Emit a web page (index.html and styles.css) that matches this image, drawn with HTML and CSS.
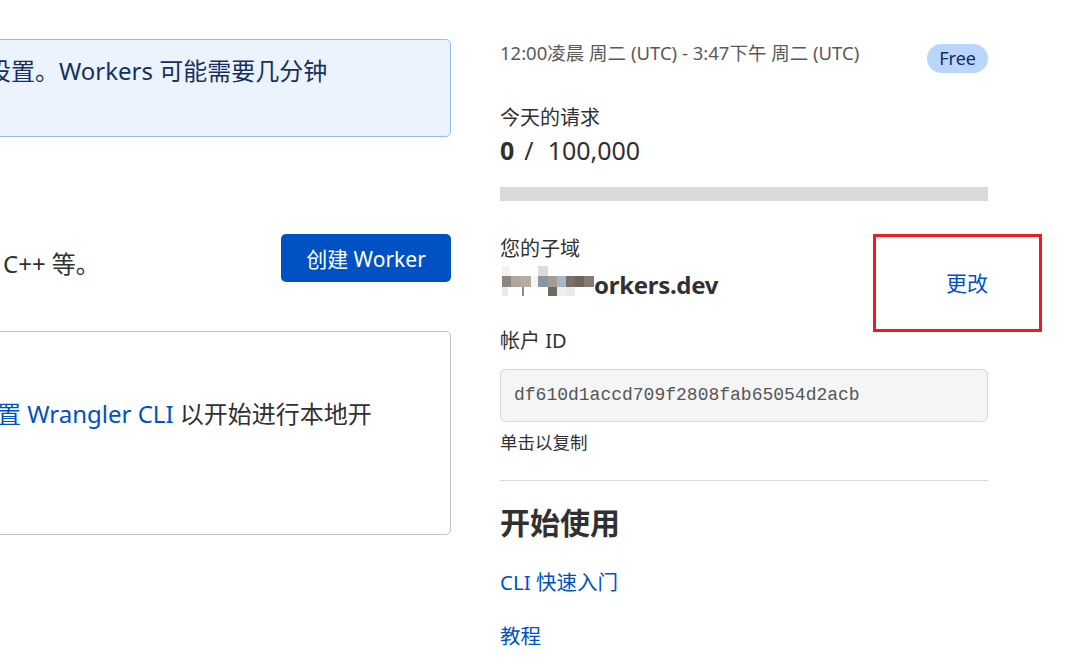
FILE: index.html
```html
<!DOCTYPE html>
<html lang="zh-CN">
<head>
<meta charset="utf-8">
<title>Workers 概述</title>
<link rel="stylesheet" href="styles.css">
</head>
<body>
<div class="page">
  <main class="left">
    <div class="notice">更新您的设置。Workers 可能需要几分钟<br>才能生效。</div>
    <div class="create-row">
      <p class="lang-text">各类语言、C++ 等。</p>
      <button class="btn-primary" type="button">创建 Worker</button>
    </div>
    <div class="cli-card">
      <p class="cli-text"><a class="link" href="#">安装并设置 Wrangler CLI</a> 以开始进行本地开<br>发。</p>
    </div>
  </main>
  <aside class="right">
    <div class="usage-head">
      <span class="period">12:00凌晨 周二 (UTC) - 3:47下午 周二 (UTC)</span>
      <span class="badge">Free</span>
    </div>
    <div class="label label-requests">今天的请求</div>
    <div class="count"><b>0</b><span class="sep">/</span>100,000</div>
    <div class="bar"></div>
    <div class="label label-sub">您的子域</div>
    <div class="domain-row">
      <span class="domain"><span class="pix" aria-hidden="true"></span>orkers.dev</span>
      <a class="link change" href="#">更改</a>
    </div>
    <div class="label label-acct">帐户 ID</div>
    <div class="id-box">df610d1accd709f2808fab65054d2acb</div>
    <div class="hint">单击以复制</div>
    <hr class="divider">
    <h2 class="start-title">开始使用</h2>
    <a class="link side-link first" href="#">CLI 快速入门</a>
    <a class="link side-link second" href="#">教程</a>
  </aside>
</div>
<div class="annotation"></div>
</body>
</html>
```

FILE: styles.css
```css
html, body {
  margin: 0;
  padding: 0;
  background: #ffffff;
}
body {
  width: 1074px;
  height: 666px;
  overflow: hidden;
  position: relative;
  font-family: "Noto Sans", "Noto Sans CJK SC", sans-serif;
  color: #313131;
}
.page {
  display: flex;
  gap: 49px;
  margin-left: -120px;
  padding-top: 39px;
  align-items: flex-start;
}
.left {
  width: 571px;
  flex: none;
}
.right {
  width: 488px;
  flex: none;
  display: flex;
  flex-direction: column;
  padding-top: 1px;
}
.link {
  color: #0051c3;
  text-decoration: none;
}

/* left column */
.notice {
  background: #ebf3ff;
  border: 1px solid #93bdf2;
  border-radius: 5px;
  padding: 14px 16px 14px 10px;
  font-size: 24px;
  line-height: 34px;
  color: #172f5c;
  white-space: nowrap;
}
.create-row {
  display: flex;
  justify-content: space-between;
  align-items: center;
  margin-top: 97px;
  height: 48px;
}
.lang-text {
  margin: 0;
  padding-left: 3px;
  padding-top: 12px;
  font-size: 24px;
  line-height: 34px;
  white-space: nowrap;
}
.btn-primary {
  width: 170px;
  height: 48px;
  border: 0;
  border-radius: 5px;
  background: #0051c3;
  color: #ffffff;
  font-family: inherit;
  font-size: 21px;
  padding: 0;
}
.cli-card {
  margin-top: 49px;
  height: 202px;
  border: 1px solid #c4c4c4;
  border-radius: 5px;
  box-sizing: content-box;
}
.cli-text {
  margin: 0;
  padding: 65px 16px 0 20px;
  font-size: 24px;
  line-height: 34px;
  white-space: nowrap;
}

/* right column */
.usage-head {
  display: flex;
  justify-content: space-between;
  align-items: flex-start;
}
.period {
  font-size: 18.5px;
  line-height: 25px;
  color: #595959;
}
.badge {
  margin-top: 4px;
  height: 29px;
  line-height: 29px;
  padding: 0 12px;
  border-radius: 15px;
  background: #b9d6ff;
  color: #1a2b55;
  font-size: 18px;
}
.label {
  font-size: 20px;
  line-height: 28px;
}
.label-requests { margin-top: 31px; }
.count {
  margin-top: 1px;
  font-size: 25px;
  line-height: 34px;
}
.count b { font-weight: 700; }
.sep {
  margin: 0 14px 0 10px;
}
.bar {
  margin-top: 20px;
  height: 14px;
  background: #d9d9d9;
}
.label-sub { margin-top: 34px; }
.domain-row {
  margin-top: 4px;
  display: flex;
  justify-content: space-between;
  align-items: center;
  height: 32px;
}
.domain {
  font-size: 24px;
  line-height: 32px;
  font-weight: 700;
  white-space: nowrap;
  letter-spacing: -0.3px;
}
.pix {
  display: inline-block;
  width: 92px;
  height: 30px;
  margin-left: 2px;
  vertical-align: -2px;
  background:
    linear-gradient(to right, #f3f3f3 0 8px, transparent 8px 36px, #dcdcdc 36px 46px, transparent 46px) 0 0 / 100% 10px no-repeat,
    linear-gradient(to right, #8b8681 0 9px, #b1a69c 9px 19px, #b4ada5 19px 29px, #f7f5f2 29px 36px, #8797a4 36px 46px, #a59d95 46px 55px, #aab7c3 55px 64px, #7b7069 64px 73px, #6c6662 73px 82px, #877b71 82px 92px) 0 10px / 100% 11px no-repeat,
    linear-gradient(to right, #e9e9e9 0 6px, transparent 6px 20px, #8a8a8a 20px 22px, transparent 22px 46px, #6f6963 46px 55px, #f0eeec 55px 64px, #e8ebee 64px 73px, transparent 73px) 0 21px / 100% 9px no-repeat;
}
.change {
  font-size: 21px;
  line-height: 28px;
}
.label-acct { margin-top: 28px; }
.id-box {
  margin-top: 14px;
  height: 51px;
  line-height: 51px;
  border: 1px solid #d9d9d9;
  border-radius: 5px;
  background: #f5f5f5;
  padding-left: 13px;
  font-family: "Liberation Mono", monospace;
  font-size: 18px;
  color: #555555;
}
.hint {
  margin-top: 8px;
  font-size: 17.5px;
  line-height: 24px;
}
.divider {
  margin: 26px 0 0;
  border: 0;
  height: 1px;
  background: #d9d9d9;
}
.start-title {
  margin: 22px 0 0;
  font-size: 30px;
  line-height: 40px;
  font-weight: 700;
}
.side-link {
  font-size: 20.5px;
  line-height: 28px;
  align-self: flex-start;
}
.side-link.first { margin-top: 25px; }
.side-link.second { margin-top: 26px; }

/* annotation overlay */
.annotation {
  position: absolute;
  left: 873px;
  top: 234px;
  width: 163px;
  height: 92px;
  border: 3px solid #ed1c24;
}
```
